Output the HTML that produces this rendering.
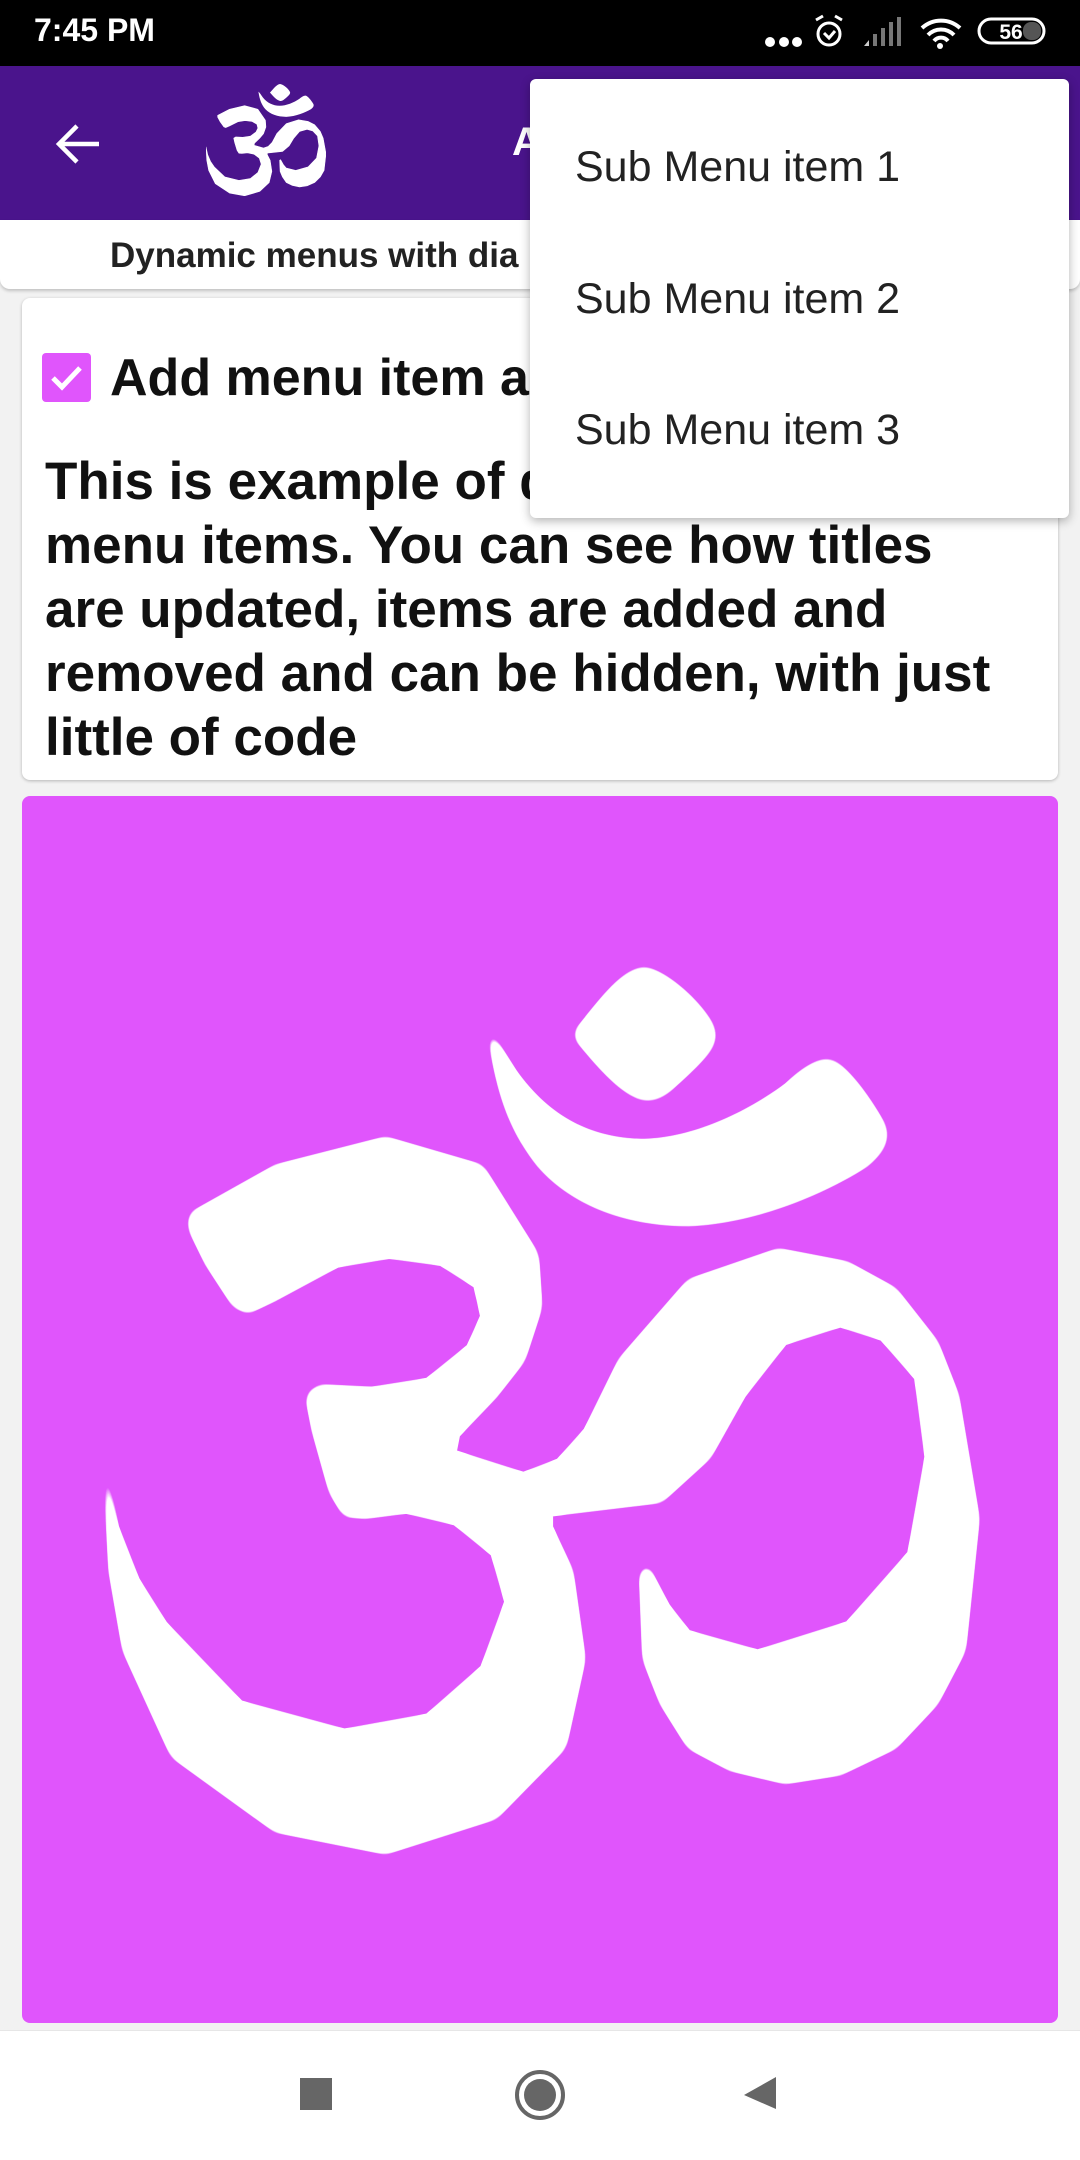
<!DOCTYPE html>
<html><head><meta charset="utf-8">
<style>
*{margin:0;padding:0;box-sizing:border-box}
html,body{width:1080px;height:2160px;overflow:hidden;background:#f2f2f2;font-family:"Liberation Sans",sans-serif}
.abs{position:absolute}
</style></head><body>
<div class="abs" style="left:0;top:0;width:1080px;height:66px;background:#000"></div>
<div class="abs" style="left:34px;top:12px;color:#fff;font-size:32px;font-weight:bold">7:45 PM</div>
<svg class="abs" style="left:740px;top:0" width="340" height="66" viewBox="0 0 340 66">
<circle cx="30" cy="42" r="5" fill="#fff"/><circle cx="44" cy="42" r="5" fill="#fff"/><circle cx="57" cy="42" r="5" fill="#fff"/>
<circle cx="89" cy="34" r="11" fill="none" stroke="#fff" stroke-width="3"/><path d="M84 33l5 5 6-7" fill="none" stroke="#fff" stroke-width="3"/>
<path d="M76 20l7-4M102 20l-7-4" stroke="#fff" stroke-width="3"/>
<path d="M124 46h5v-6z" fill="#ccc"/><rect x="133" y="34" width="4" height="12" fill="#777"/><rect x="141" y="28" width="4" height="18" fill="#777"/><rect x="149" y="22" width="4" height="24" fill="#777"/><rect x="157" y="17" width="4" height="29" fill="#777"/>
<path d="M182 28a28 28 0 0 1 38 0M188 35a18 18 0 0 1 26 0M194 41a9 9 0 0 1 14 0" fill="none" stroke="#fff" stroke-width="4"/><circle cx="200" cy="46" r="3" fill="#fff"/>
<rect x="239" y="19" width="65" height="24" rx="12" fill="none" stroke="#fff" stroke-width="3"/><rect x="283" y="22" width="18" height="18" rx="8" fill="#555"/>
<text x="271" y="39" fill="#fff" font-size="21" font-weight="bold" text-anchor="middle" font-family="Liberation Sans">56</text>
</svg>
<div class="abs" style="left:0;top:66px;width:1080px;height:154px;background:#4a148c"></div>
<svg class="abs" style="left:55px;top:121px" width="46" height="46" viewBox="0 0 46 46"><path d="M44 23H4M22 5L4 23l18 18" fill="none" stroke="#fff" stroke-width="4.5"/></svg>
<svg class="abs" style="left:206px;top:84px" width="120" height="112" viewBox="152 212 1268 1010" preserveAspectRatio="none"><g fill="#fff"><use href="#om"/></g></svg>
<div class="abs" style="left:512px;top:120px;color:#fff;font-size:40px;font-weight:bold">A</div>
<div class="abs" style="left:0;top:220px;width:1080px;height:69px;background:#fff;border-radius:0 0 10px 10px;box-shadow:0 2px 3px rgba(0,0,0,.2)"></div>
<div class="abs" style="left:110px;top:236px;font-size:35px;font-weight:bold;color:#222">Dynamic menus with dia</div>
<div class="abs" style="left:22px;top:298px;width:1036px;height:482px;background:#fff;border-radius:8px;box-shadow:0 1px 3px rgba(0,0,0,.25)"></div>
<div class="abs" style="left:42px;top:353px;width:49px;height:49px;background:#e055fc;border-radius:4px"></div>
<svg class="abs" style="left:42px;top:353px" width="49" height="49"><path d="M11 25l9 9 18-19" fill="none" stroke="#fff" stroke-width="5"/></svg>
<div class="abs" style="left:110px;top:348px;font-size:52px;font-weight:bold;color:#111">Add menu item a</div>
<div class="abs" style="left:45px;top:450px;width:1020px;font-size:53px;font-weight:bold;color:#111;line-height:64px;white-space:nowrap">This is example of dynamic<br>menu items. You can see how titles<br>are updated, items are added and<br>removed and can be hidden, with just<br>little of code</div>
<div class="abs" style="left:22px;top:796px;width:1036px;height:1227px;background:#e055fc;border-radius:8px"></div>
<svg class="abs" style="left:0;top:780px" width="1080" height="1380" viewBox="0 0 1568 1570" preserveAspectRatio="none">
<defs>
<filter id="sm" x="0" y="0" width="100%" height="100%">
<feGaussianBlur in="SourceAlpha" stdDeviation="9"/>
<feComponentTransfer><feFuncA type="linear" slope="12" intercept="-5.5"/></feComponentTransfer>
<feComposite in="SourceGraphic" operator="in"/>
</filter>
<g id="om">
<path d="M828,290 C870,250 900,215 935,212 C970,215 1030,260 1040,285 C1045,300 1030,315 980,350 C960,365 945,366 935,365 C900,360 860,320 828,290 Z"/>
<path d="M706,282 C720,360 740,400 780,440 C830,485 910,508 1000,508 C1100,505 1200,470 1260,440 C1290,420 1295,405 1285,390 C1260,355 1225,320 1205,317 C1185,315 1160,330 1140,345 C1080,380 1000,408 930,408 C860,406 800,385 750,330 C730,305 712,282 706,282 Z"/>
<polygon stroke="#fff" stroke-width="6" stroke-linejoin="round" points="275,495 400,440 560,408 700,440 780,540 785,600 760,660 720,700 665,745 660,765 760,790 810,775 850,740 900,660 1000,570 1130,535 1230,550 1300,580 1360,640 1390,700 1420,840 1400,990 1360,1050 1300,1100 1220,1130 1140,1140 1060,1125 1000,1100 960,1050 935,1000 930,900 940,895 970,940 1000,970 1100,992 1230,960 1320,880 1345,770 1330,680 1280,635 1220,620 1140,640 1080,700 1030,770 960,820 800,835 800,850 830,900 848,1000 820,1100 720,1180 560,1220 400,1195 250,1110 180,990 160,900 152,780 170,850 200,910 240,960 350,1050 500,1082 620,1065 700,1010 735,935 715,880 660,845 590,832 530,838 500,836 480,810 455,740 445,700 465,690 540,693 620,683 680,645 700,610 690,575 640,550 565,542 490,552 400,590 360,605 340,598 300,550 275,510"/>
</g></defs>
<g fill="#fff" filter="url(#sm)"><rect x="0" y="0" width="1568" height="1570" fill="none"/><use href="#om"/></g>
</svg>
<div class="abs" style="left:530px;top:79px;width:539px;height:439px;background:#fff;border-radius:6px;box-shadow:0 3px 10px rgba(0,0,0,.3)"></div>
<div class="abs" style="left:575px;top:143px;font-size:43px;color:#222">Sub Menu item 1</div>
<div class="abs" style="left:575px;top:275px;font-size:43px;color:#222">Sub Menu item 2</div>
<div class="abs" style="left:575px;top:406px;font-size:43px;color:#222">Sub Menu item 3</div>
<div class="abs" style="left:0;top:2030px;width:1080px;height:130px;background:#fff;border-top:1px solid #e6e6e6"></div>
<div class="abs" style="left:300px;top:2078px;width:32px;height:32px;background:#666"></div>
<div class="abs" style="left:515px;top:2070px;width:50px;height:50px;border:4px solid #666;border-radius:50%"></div>
<div class="abs" style="left:524px;top:2079px;width:32px;height:32px;background:#666;border-radius:50%"></div>
<svg class="abs" style="left:742px;top:2075px" width="36" height="36"><path d="M34 2v32L2 20z" fill="#666"/></svg>
</body></html>
